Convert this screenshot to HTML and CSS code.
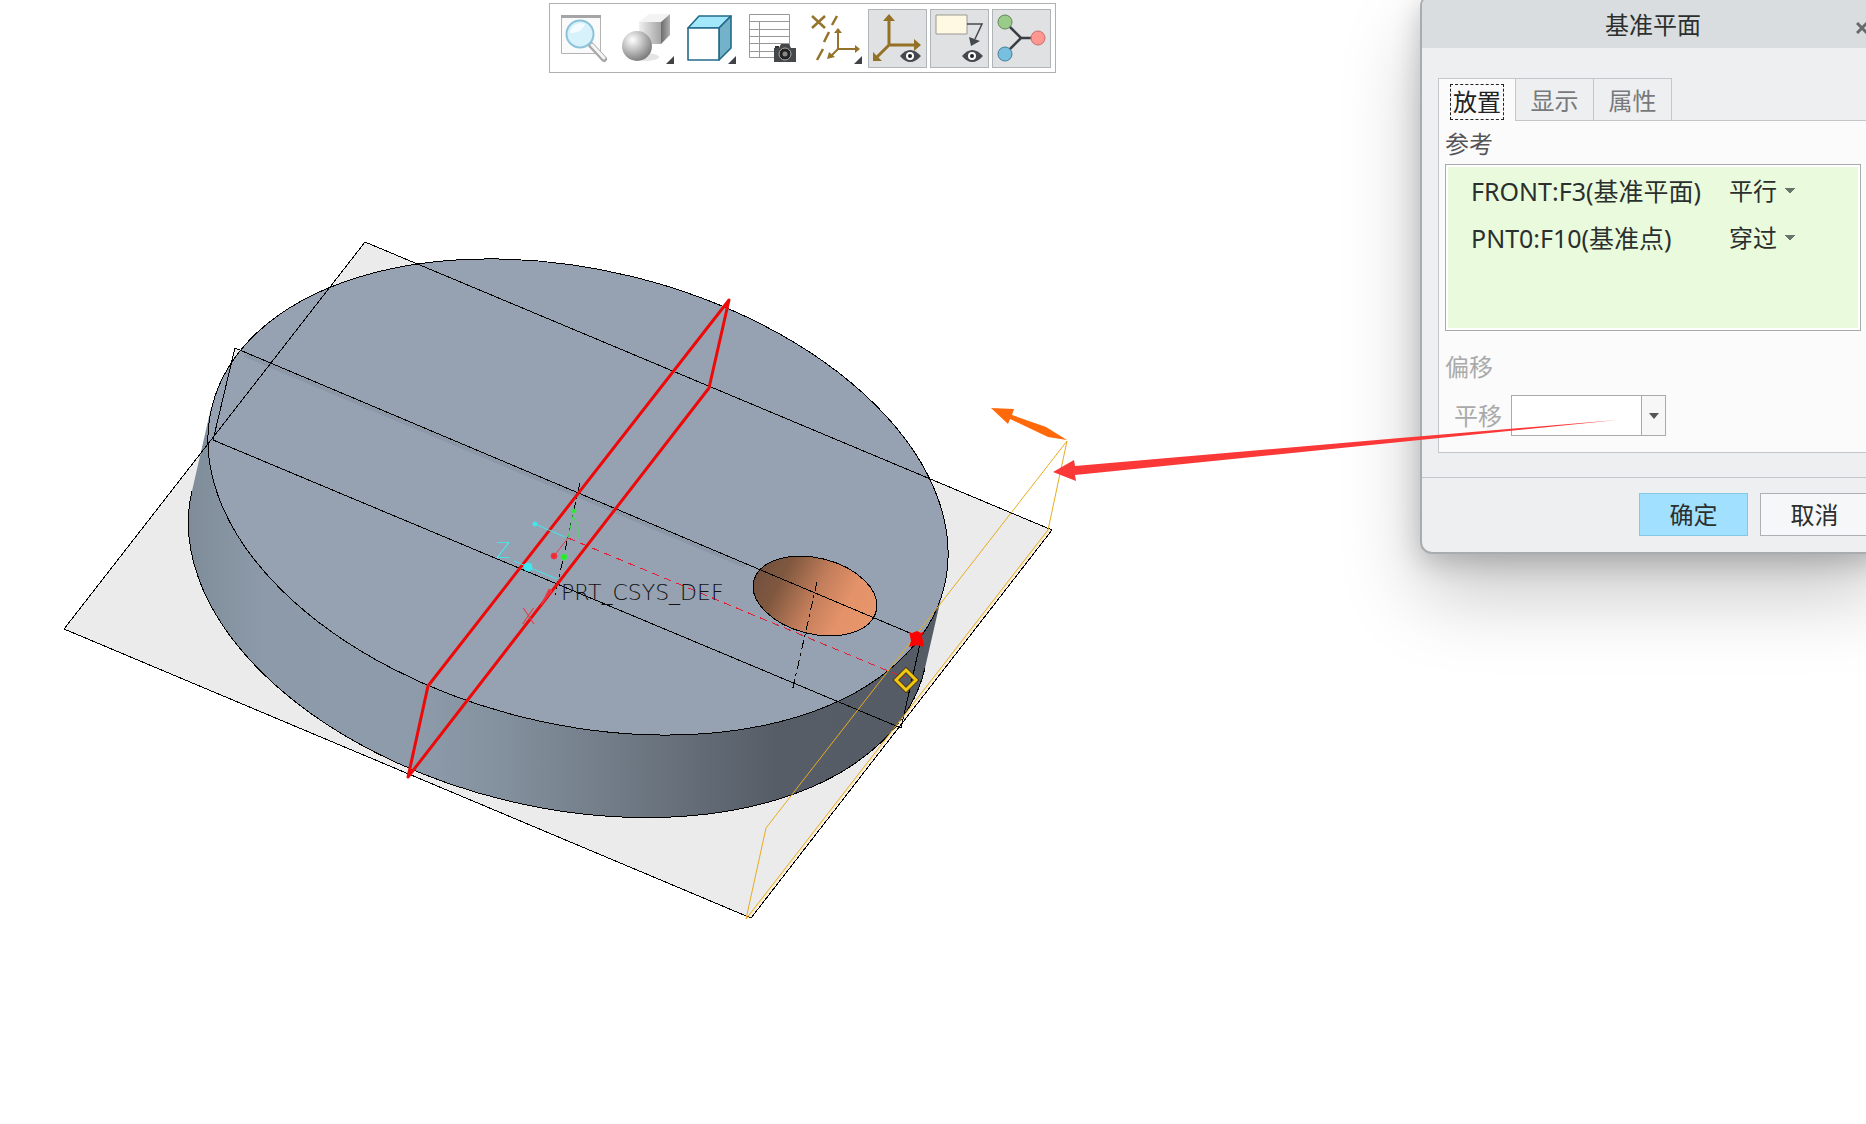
FILE: index.html
```html
<!DOCTYPE html>
<html lang="zh-CN">
<head>
<meta charset="utf-8">
<meta name="viewport" content="width=device-width, initial-scale=1">
<title>基准平面</title>
<link rel="stylesheet" href="styles.css">
</head>
<body>
<main class="workspace">

  <svg class="model" width="1120" height="960" viewBox="0 0 1120 960" role="img" aria-label="PRT_CSYS_DEF">
    <defs>
      <linearGradient id="side" gradientUnits="userSpaceOnUse" x1="188" y1="0" x2="940" y2="0">
        <stop offset="0" stop-color="#7f8c98"/>
        <stop offset="0.1" stop-color="#8c9aaa"/>
        <stop offset="0.3" stop-color="#8e9bab"/>
        <stop offset="0.42" stop-color="#83909d"/>
        <stop offset="0.6" stop-color="#6d7782"/>
        <stop offset="0.78" stop-color="#565d67"/>
        <stop offset="1" stop-color="#565c66"/>
      </linearGradient>
      <linearGradient id="bore" gradientUnits="userSpaceOnUse" x1="754" y1="582" x2="876" y2="612">
        <stop offset="0" stop-color="#72503f"/>
        <stop offset="0.2" stop-color="#80583f"/>
        <stop offset="0.5" stop-color="#c37e5b"/>
        <stop offset="0.75" stop-color="#e39269"/>
        <stop offset="1" stop-color="#e8966b"/>
      </linearGradient>
    </defs>

    <!-- datum plane fills -->
    <path class="plane-fill" d="M365 242 1052 530 751 918 64 629z"/>
    <path class="plane-fill" d="M235 348 919 638 901 728 213 440z"/>
    <path class="preview-fill" d="M1048 530 1052 530 751 918 746 919z"/>

    <!-- disc body -->
    <path fill="url(#side)" d="M211 408 192 491A377 227 13.8 0 0 925 668L944 585z"/>
    <path class="edge" d="M192 491A377 227 13.8 0 0 925 668"/>
    <ellipse class="top-face" cx="578" cy="497" rx="377" ry="227" transform="rotate(13.8 578 497)"/>
    <ellipse class="bore" cx="815" cy="596" rx="63" ry="38" transform="rotate(13.9 815 596)"/>

    <!-- datum plane outlines -->
    <path class="soft" d="M245 355 745 566"/>
    <path class="edge" d="M365 242 1052 530 751 918 64 629z"/>
    <path class="edge" d="M235 348 917 636M920 644 901 728 213 440 235 348"/>

    <!-- axes of the disc and the bore -->
    <path class="axis" d="M580 483 555 595M817 582 792 692"/>
    <path class="hidden-axis" d="M568 538 905 678"/>

    <path class="preview" d="M1067 441 1048 530 746 919 766 828z"/>
    <path class="selected" d="M729 300 709 388 408 777 428 686z"/>

    <!-- coordinate system -->
    <g class="cyan"><path d="M535 524 565 537M514 561 557 579"/><circle cx="535" cy="524" r="2"/><circle cx="528" cy="567" r="4"/></g>
    <g class="green"><path d="M574 511 568 538M574 518 578 526V538"/><circle cx="574" cy="511" r="2"/><circle cx="564" cy="557" r="3"/></g>
    <g class="crimson"><path d="M554 556 568 538"/><circle cx="554" cy="556" r="3"/><path class="cone" d="M549 589 552 591 541 605z"/></g>
    <text class="label cyan-text" x="496" y="558">Z</text>
    <text class="label red-text" x="521" y="624">X</text>
    <text class="label" x="561" y="600">PRT_CSYS_DEF</text>

    <!-- reference point and handle -->
    <path class="point" d="M909 632 912 633 917 631 921 633 924 631 922 636 923 641 924 647 917 645 909 647 911 641 910 636z"/>
    <path class="handle-shade" d="M906 670 916 680 906 690 896 680z"/>
    <path class="handle" d="M906 670 916 680 906 690 896 680z"/>
    <path class="normal" d="M991 408 1014 409 1012 415 1046 427 1067 440 1048 437 1010 419 1008 424z"/>
  </svg>

  <div class="view">
    <div class="toolbar" role="toolbar" aria-label="视图">
      <button class="tool" type="button" aria-label="重新调整">
        <svg viewBox="0 0 59 59"><path d="M3.5 6.5h39v38h-39z" fill="#fafafa" stroke="#b3b3b3"/><path d="M3 6h40v3H3z" fill="#a5a5a5"/><path d="m33 36 13 14" stroke="#a7a7a7" stroke-width="6" stroke-linecap="round"/><path d="m34 36 12 13" stroke="#f5f5f5" stroke-width="3" stroke-linecap="round"/><circle cx="22" cy="25" r="13.5" fill="#d8f2fb" stroke="#8cc3da" stroke-width="2"/><path d="M12 24a11 11 0 0 1 15-9c-3 7-8 9-15 9z" fill="#f4fcff"/></svg>
      </button>
      <button class="tool" type="button" aria-label="着色">
        <svg viewBox="0 0 59 59"><defs><radialGradient id="ball" cx=".35" cy=".3" r=".75"><stop offset="0" stop-color="#fff"/><stop offset=".5" stop-color="#bcbcbc"/><stop offset="1" stop-color="#777"/></radialGradient><linearGradient id="cubeface"><stop offset="0" stop-color="#f0f0f0"/><stop offset="1" stop-color="#a4a4a4"/></linearGradient><linearGradient id="cubeside"><stop offset="0" stop-color="#6c6c6c"/><stop offset="1" stop-color="#b0b0b0"/></linearGradient></defs><path d="m19 13 10-8h21l-9 8z" fill="#f3f3f3"/><path d="M19 13h22v22H19z" fill="url(#cubeface)"/><path d="m41 13 9-8v21l-9 9z" fill="url(#cubeside)"/><ellipse cx="24" cy="48" rx="15" ry="4" fill="#e4e4e4"/><circle cx="17" cy="37" r="15" fill="url(#ball)"/><path d="M54 47v8h-8z" fill="#3f4347"/></svg>
      </button>
      <button class="tool" type="button" aria-label="已保存方向">
        <svg viewBox="0 0 59 59" stroke="#236b8a" stroke-width="1.6" stroke-linejoin="round"><path d="M6 19 17 7h32L37 19z" fill="#a2e8fa"/><path d="m37 19 12-12v32L37 51z" fill="#74b2c9"/><path d="M6 19h31v32H6z" fill="#fff"/><path d="M54 47v8h-8z" fill="#3f4347" stroke="none"/></svg>
      </button>
      <button class="tool" type="button" aria-label="视图管理器">
        <svg viewBox="0 0 59 59"><path d="M5.500 5.500h40v43h-40z" fill="#fff" stroke="#999"/><path d="M5 12.500h40M5 20.500h40M5 27.500h40M5 34.500h40M5 42.500h40M15.500 12v36" stroke="#999" fill="none"/><path d="M30 39h5l2-4h8l2 4h5v14H30z" fill="#45484b"/><circle cx="41" cy="45" r="6" fill="#222" stroke="#aaa"/><circle cx="41" cy="45" r="2.500" fill="#888"/><path d="M31 37h4v2h-4z" fill="#333"/></svg>
      </button>
      <button class="tool" type="button" aria-label="基准显示过滤器">
        <svg viewBox="0 0 59 59" fill="none" stroke="#95732a" stroke-width="2.500"><path d="m6 7 13 12M19 7 6 19M31 7l-5 9M23 23l-5 10M17 40l-6 11"/><path d="M32 22v18h19M32 40l-8 8" stroke-width="2"/><path d="m28 24 4-5 4 5zM49 36l5 4-5 4zM23 43l-2 7 8-2z" fill="#95732a" stroke="none"/><path d="M56 47v8h-8z" fill="#3f4347" stroke="none"/></svg>
      </button>
      <button class="tool pressed" type="button" aria-pressed="true" aria-label="坐标系显示">
        <svg viewBox="0 0 59 59" fill="none" stroke="#947126" stroke-width="3"><path d="M21 10v26h27M21 36 9 48"/><path d="m15 12 6-7 6 7zM46 30l7 6-7 6zM5 43v9h9z" fill="#947126" stroke="none"/><g stroke="none"><path d="M32 47q10-12 21 0-11 12-21 0z" fill="#44494e"/><circle cx="42" cy="47" r="4" fill="#fff"/><circle cx="42" cy="47" r="2" fill="#222"/></g></svg>
      </button>
      <button class="tool pressed" type="button" aria-pressed="true" aria-label="注释显示">
        <svg viewBox="0 0 59 59" fill="none"><path d="M6 6h31v19H6z" fill="#fff8e3" stroke="#9a9a94"/><path d="M37 15h15l-7 15" stroke="#44494e" stroke-width="1.500"/><path d="m39 28 11 4-9 5z" fill="#44494e"/><path d="M32 47q10-12 21 0-11 12-21 0z" fill="#44494e"/><circle cx="42" cy="47" r="4" fill="#fff"/><circle cx="42" cy="47" r="2" fill="#222"/></svg>
      </button>
      <button class="tool pressed" type="button" aria-pressed="true" aria-label="旋转中心">
        <svg viewBox="0 0 59 59"><path d="m13 13 16 16h17M29 29 13 45" fill="none" stroke="#383e43" stroke-width="2.500"/><circle cx="13" cy="13" r="7" fill="#98cc88" stroke="#64845c"/><circle cx="46" cy="29" r="7" fill="#ff9790" stroke="#c56e6a"/><circle cx="13" cy="45" r="7" fill="#78bfe0" stroke="#467e99"/></svg>
      </button>
    </div>
  </div>

  <section class="dialog" role="dialog" aria-labelledby="dialog-title">
    <header class="title-bar">
      <h1 class="title" id="dialog-title">基准平面</h1>
      <button class="close" type="button" aria-label="关闭"><svg width="12" height="12" viewBox="0 0 12 12"><path d="m1 1 10 10M11 1 1 11"/></svg></button>
    </header>
    <div class="content">
      <div class="tabs" role="tablist">
        <button class="tab active" type="button" role="tab" aria-selected="true"><span class="focus">放置</span></button>
        <button class="tab" type="button" role="tab" aria-selected="false">显示</button>
        <button class="tab" type="button" role="tab" aria-selected="false">属性</button>
      </div>
      <div class="pane" role="tabpanel">
        <h2 class="caption">参考</h2>
        <ul class="references">
          <li class="reference">
            <label class="name" for="front">FRONT:F3(基准平面)</label>
            <select class="constraint" id="front"><option>平行</option></select>
          </li>
          <li class="reference">
            <label class="name" for="pnt0">PNT0:F10(基准点)</label>
            <select class="constraint" id="pnt0"><option>穿过</option></select>
          </li>
        </ul>
        <h2 class="caption muted">偏移</h2>
        <div class="offset">
          <label class="offset-label" for="offset">平移</label>
          <input class="offset-value" id="offset" type="text">
          <button class="offset-menu" type="button" aria-label="平移"><svg width="12" height="8" viewBox="0 0 12 8"><path d="M1 1h10L6 7z"/></svg></button>
        </div>
      </div>
    </div>
    <footer class="actions">
      <button class="action primary" type="button">确定</button>
      <button class="action" type="button">取消</button>
    </footer>
  </section>

  <svg class="callout" width="1640" height="500" viewBox="0 0 1640 500" aria-hidden="true">
    <path d="M1053 472 1074 460 1075 466 1400 438 1617 420 1400 442 1075 475 1076 481z"/>
  </svg>
</main>
</body>
</html>
```
FILE: styles.css
```css
* {
  box-sizing: border-box;
}

body {
  margin: 0;
  background: #fff;
  color: #2b2f2d;
  font: 24px/36px "Noto Sans", "Noto Sans CJK SC", sans-serif;
}

button,
input,
select {
  margin: 0;
  padding: 0;
  border: 0;
  border-radius: 0;
  background: none;
  color: inherit;
  font: inherit;
}

.workspace {
  position: relative;
  min-height: 100vh;
  overflow: hidden;
}

/* model */

.model {
  position: absolute;
  top: 0;
  left: 0;
  fill: none;
}

.plane-fill { fill: #ebebeb; }
.preview-fill { fill: #f6ecd9; }
.edge { stroke: #000; shape-rendering: crispEdges; }
.soft { stroke: #8c98a7; stroke-width: 4; }
.top-face { fill: #96a2b2; stroke: #000; shape-rendering: crispEdges; }
.bore { fill: url(#bore); stroke: #000; shape-rendering: crispEdges; }
.axis { stroke: #000; stroke-dasharray: 9 4 3 4; shape-rendering: crispEdges; }
.hidden-axis { stroke: #e01f35; stroke-dasharray: 7 6; shape-rendering: crispEdges; }
.preview { stroke: #e6ab22; }
.selected { stroke: #ee0909; stroke-width: 3; stroke-linejoin: round; }
.cyan { stroke: #3fe8ee; }
.cyan circle { fill: #3fe8ee; }
.green { stroke: #45dc5b; }
.green circle { fill: #22ee22; }
.crimson { stroke: #e43d4c; }
.crimson circle,
.cone { fill: #f02c38; }
.point { fill: #f00; }
.handle-shade { stroke: #4a3f20; stroke-width: 5; }
.handle { stroke: #f5c70c; stroke-width: 3; }
.normal { fill: #ff690a; }

.label {
  fill: #111;
  font: 200 22px "DejaVu Sans Light", "DejaVu Sans", sans-serif;
}

.cyan-text { fill: #3fe8ee; }
.red-text { fill: #e43d4c; }

.callout {
  position: absolute;
  top: 0;
  left: 0;
  fill: #fb3838;
  pointer-events: none;
}

/* toolbar */

.view {
  display: flex;
  justify-content: center;
  width: 86%;
  padding-top: 3px;
}

.toolbar {
  position: relative;
  display: flex;
  gap: 3px;
  padding: 5px 4px 4px 8px;
  border: 1px solid #adb1b4;
  background: #fff;
}

.tool {
  width: 59px;
  height: 59px;
  border: 1px solid transparent;
}

.tool svg {
  display: block;
  width: 59px;
  height: 59px;
  margin: -1px;
}

.pressed {
  border-color: #b0b5b8;
  background: #dfe1e3;
}

/* dialog */

.dialog {
  position: absolute;
  top: -6px;
  right: -20px;
  width: 466px;
  border: 2px solid #a9acae;
  border-radius: 12px;
  background: #eeeff1;
  box-shadow: 0 40px 80px rgb(0 0 0 / 22%), 0 8px 28px rgb(0 0 0 / 20%);
}

.title-bar {
  display: grid;
  grid-template-columns: 28px 1fr 28px;
  align-items: center;
  height: 52px;
  padding-top: 6px;
  border-radius: 10px 10px 0 0;
  background: #dadddf;
}

.title {
  grid-column: 2;
  margin: 0;
  font-size: 24px;
  font-weight: 400;
  text-align: center;
}

.close {
  height: 36px;
  text-align: left;
}

.close svg {
  fill: none;
  stroke: #686b6d;
  stroke-width: 3;
}

.content {
  padding: 30px 0 24px 16px;
}

.tabs {
  display: flex;
  height: 43px;
}

.tab {
  width: 78px;
  padding-top: 3px;
  border: 1px solid #c3c7ca;
  border-left: 0;
  color: #77797b;
}

.active {
  border-left: 1px solid #c3c7ca;
  border-bottom: 0;
  background: #fbfbfb;
  color: #222;
}

.focus {
  display: inline-block;
  padding: 0 2px;
  border: 1px dashed #222;
  line-height: 34px;
}

.tabs::after {
  content: "";
  flex: 1;
  border-bottom: 1px solid #c3c7ca;
}

.pane {
  padding: 5px 22px 16px 6px;
  border: 1px solid #c3c7ca;
  border-top: 0;
  background: #fbfbfb;
}

.caption {
  margin: 0;
  color: #555;
  font-size: 24px;
  font-weight: 400;
}

.muted {
  color: #aaa;
}

.references {
  min-height: 167px;
  margin: 2px 0 18px;
  padding: 2px 0 0 25px;
  border: 1px solid #a8aba8;
  background: #eafbdd;
  box-shadow: inset 0 0 0 2px #fff;
  list-style: none;
}

.reference {
  display: grid;
  grid-template-columns: 258px 1fr;
  align-items: center;
  height: 47px;
}

.name {
  font-size: 25px;
}

.constraint {
  width: 68px;
  appearance: none;
  background-image: linear-gradient(to bottom left, #68756a 50%, transparent 50%),
    linear-gradient(to bottom right, #68756a 50%, transparent 50%);
  background-position: 56px 50%, 61px 50%;
  background-size: 5px 6px;
  background-repeat: no-repeat;
}

.offset {
  display: flex;
  align-items: center;
  margin-top: 10px;
  padding-left: 9px;
}

.offset-label {
  width: 57px;
  color: #aaa;
}

.offset-value {
  width: 131px;
  height: 41px;
  padding: 0 8px;
  border: 1px solid #a8aaac;
  background: #fff;
}

.offset-menu {
  display: grid;
  place-items: center;
  width: 24px;
  height: 41px;
  border: 1px solid #a8aaac;
  border-left: 0;
  background: #f7f7f7;
}

.offset-menu svg {
  fill: #555;
}

.actions {
  display: flex;
  justify-content: flex-end;
  gap: 12px;
  padding: 15px 15px 16px;
  border-top: 1px solid #c3c7ca;
}

.action {
  width: 109px;
  height: 43px;
  border: 1px solid #aeb1b3;
  background: #f6f7f8;
}

.primary {
  border-color: #84c8e8;
  background: #a2e0ff;
}
```
